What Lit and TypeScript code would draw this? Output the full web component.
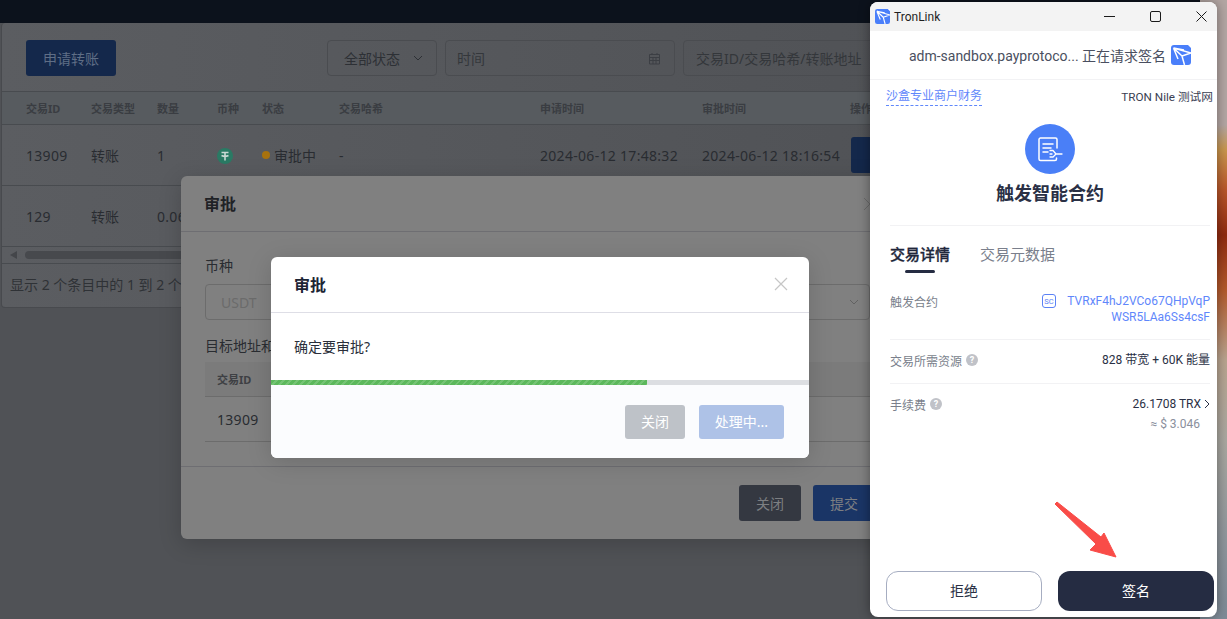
import { LitElement, html, css, svg } from "lit";
import { customElement } from "lit/decorators.js";

const logo = (size: number) => html`<svg width=${size} height=${size} viewBox="0 0 20 20" class="logo">
  <path d="M3 0H20V17A3 3 0 0 1 17 20H3A3 3 0 0 1 0 17V3A3 3 0 0 1 3 0Z" fill="#4a7ffa"/>
  ${svg`<path d="M2.5 3L20 8M2.5 3L11 11L13.5 20M11 11L20 8M2.5 3L7 14M2.5 3L13 5" fill="none" stroke="#fff" stroke-width="1.5" stroke-linejoin="round"/>`}
  <path d="M17 0L20 0L20 3Z" fill="#fff"/>
</svg>`;

const rows = [
  { id: "13909", type: "转账", amount: "1", full: true },
  { id: "129", type: "转账", amount: "0.06", full: false },
];

@customElement("app-root")
export class AppRoot extends LitElement {
  static styles = css`
    :host {
      display: block;
      position: relative;
      width: 1227px;
      height: 619px;
      overflow: hidden;
      background: #505256;
      font-family: "Noto Sans", "Noto Sans CJK SC", sans-serif;
      font-size: 14px;
      color: #292c31;
    }
    * { box-sizing: border-box; }
    .desktop {
      position: absolute;
      left: 1200px; top: 0; width: 27px; height: 619px;
      background: linear-gradient(180deg, #b3a6a3 0, #b3a6a3 125px, #c9964c 150px, #b8562a 190px, #8f2a10 235px, #b35a2c 290px, #b9a48f 360px, #a9a7a0 440px, #8f969c 540px, #7d8a96 619px);
    }
    .topbar { height: 23px; background: #0c121c; }
    .card {
      margin-left: 1px;
      width: 920px;
      height: 285px;
      border: 1px solid #484a4e;
      border-top: none;
      border-radius: 4px 0 0 4px;
      background: linear-gradient(90deg, #5b5d61, #505256);
    }
    .toolbar { display: flex; height: 69px; padding: 17px 0 0 24px; border-bottom: 1px solid #484b4f; }
    .apply {
      width: 90px; height: 36px; border-radius: 3px; flex: none;
      background: #14284b; color: #5f6e86; font-size: 14px;
      display: flex; align-items: center; justify-content: center;
    }
    .filters { display: flex; gap: 8px; margin-left: 211px; flex: none; }
    .field {
      height: 36px; border: 1px solid #4a4c50; border-radius: 4px; flex: none;
      display: flex; align-items: center; justify-content: space-between;
      color: #2d3035; font-size: 14px;
    }
    .select { width: 110px; padding: 0 13px 0 16px; }
    .date { width: 230px; padding: 0 13px 0 11px; color: #34373b; }
    .search { width: 260px; padding: 0 11px 0 12px; color: #34373b; justify-content: flex-start; }
    .grid {
      display: grid;
      grid-template-columns: 65px 66px 60px 45px 77px 201px 162px 148px 1fr;
      padding-left: 24px;
      align-items: center;
      border-bottom: 1px solid #484b4f;
    }
    .thead { height: 33px; font-size: 11px; font-weight: 700; color: #3a3d42; background: #575b5f; }
    .row { height: 61px; white-space: nowrap; }
    .num { letter-spacing: .3px; }
    .coin { display: block; margin-top: 2px; }
    .status { display: flex; align-items: center; gap: 4px; }
    .dot { width: 8px; height: 8px; border-radius: 50%; background: #a8720e; }
    .op { width: 40px; height: 36px; border-radius: 3px; background: #14284b; margin-left: 1px; }
    .scroll { height: 17px; display: flex; align-items: center; gap: 8px; padding-left: 8px; border-bottom: 1px solid #484b4f; }
    .arrow { width: 0; height: 0; border: 4px solid transparent; border-left: 0; border-right: 7px solid #44464a; }
    .thumb { width: 500px; height: 8px; border-radius: 4px; background: #47494d; }
    .foot { padding: 10px 8px; font-size: 14px; color: #2f3236; }

    .modal {
      position: absolute;
      border-radius: 6px;
      display: flex;
      flex-direction: column;
    }
    .m1 {
      left: 181px; top: 176px; width: 720px; height: 363px;
      background: #808080;
      box-shadow: 0 5px 22px rgba(0,0,0,.18);
      color: #292c31;
    }
    .m1-head {
      height: 56px; flex: none; border-bottom: 1px solid #6e6e72;
      padding: 0 23px 2px; display: flex; align-items: center;
      font-size: 16px; font-weight: 700; color: #1f2226;
    }
    .m1-close { position: absolute; left: 682px; top: 21px; }
    .m1-body { padding: 26px 25px 0 24px; flex: none; height: 235px; border-bottom: 1px solid #6e6e72; }
    .label { line-height: 20px; height: 20px; margin-top: -2px; }
    .m1-input {
      margin-top: 8px; height: 36px; width: 665px; border: 1px solid #6c6c6c; border-radius: 4px;
      padding: 0 10px 0 15px; display: flex; align-items: center; justify-content: space-between;
      color: #6b6b6b; font-weight: 400;
    }
    .label2 { margin-top: 16px; white-space: nowrap; }
    .sub-head {
      margin-top: 6px; height: 35px; background: #7b7b7b; border-bottom: 1px solid #6c6c6c;
      padding: 0 11px 0 12px; font-size: 11px; font-weight: 700; color: #3e4044;
      display: flex; align-items: center; width: 665px;
    }
    .sub-row {
      height: 45px; border-bottom: 1px solid #6c6c6c; padding: 0 11px 0 12px;
      display: flex; align-items: center; width: 665px;
    }
    .m1-foot { display: flex; gap: 12px; padding: 18px 0 0 558px; }
    .m1-btn {
      height: 36px; border-radius: 3px; display: flex; align-items: center; justify-content: center;
      color: #7d7f82; font-size: 14px; flex: none; padding-bottom: 1px;
    }
    .dark { width: 62px; background: #343841; }
    .blue { width: 62px; background: #1a3566; }

    .m2 {
      left: 271px; top: 257px; width: 538px; height: 201px;
      background: #fff; overflow: hidden;
      box-shadow: 0 4px 24px rgba(0,0,0,.15);
      color: #1c2434;
    }
    .m2-head {
      height: 56px; flex: none; border-bottom: 1px solid #dedee6;
      padding: 0 21px 2px 23px; display: flex; align-items: center; justify-content: space-between;
      font-size: 16px; font-weight: 700;
    }
    .m2-body { height: 67px; flex: none; padding-top: 24px; padding-left: 23px; color: #2a2f3a; font-size: 14px; line-height: 20px; }
    .track { height: 5px; flex: none; background: #dcdee2; }
    .bar {
      height: 100%;
      background: repeating-linear-gradient(135deg, #5cb85c 0 3px, #75c475 3px 5px);
    }
    .m2-foot {
      flex: 1; background: #fbfcfe; display: flex; justify-content: flex-end;
      gap: 14px; padding: 20px 25px 0 0;
    }
    .m2-btn {
      height: 34px; border-radius: 3px; color: #fff; font-size: 14px; padding-bottom: 2px;
      display: flex; align-items: center; justify-content: center;
    }
    .gray { width: 60px; background: #bec2c8; }
    .proc { width: 85px; background: #aec2e7; }

    .win {
      position: absolute; left: 870px; top: 2px; width: 347px; height: 615px;
      background: #fff; border-radius: 8px; overflow: hidden;
      box-shadow: 0 0 12px rgba(0,0,0,.4);
      font-family: Roboto, "Noto Sans CJK SC", sans-serif;
      color: #2a3045;
      display: flex; flex-direction: column;
    }
    .title {
      height: 29px; flex: none; background: #f3f3f3;
      display: flex; align-items: center; gap: 24px; padding: 0 5px 0 5px;
      color: #1f1f1f; font-size: 12px;
    }
    .title .name { margin-left: -20px; flex: 1; }
    .ctl { width: 22px; height: 29px; display: flex; align-items: center; justify-content: center; }
    .req {
      height: 49px; flex: none; border-bottom: 1px solid #f2f2f4;
      display: flex; align-items: center; justify-content: center; gap: 5px;
      font-size: 14px; color: #4a4f60; padding-left: 13px; white-space: nowrap;
    }
    .meta { display: flex; justify-content: space-between; align-items: flex-start; padding: 7px 4px 0 16px; font-size: 12px; flex: none; height: 44px; }
    .merchant { color: #5f87fb; border-bottom: 1px dashed #5f87fb; line-height: 18px; height: 19px; font-size: 12px; }
    .net { color: #3a4052; line-height: 20px; font-size: 11.7px; }
    .circle {
      width: 50px; height: 50px; border-radius: 50%; background: #4a7ff7; flex: none; align-self: center; margin-left: 13px;
      display: flex; align-items: center; justify-content: center;
    }
    .heading { text-align: center; font-size: 18px; font-weight: 700; line-height: 26px; margin-top: 7px; padding-left: 13px; color: #2a3045; flex: none; }
    .sep { margin: 18px 7px 0 20px; border-top: 1px solid #f2f2f4; flex: none; }
    .tabs { display: flex; gap: 30px; padding: 18px 0 0 20px; font-size: 15px; line-height: 22px; height: 62px; flex: none; }
    .tab { color: #7a7f8c; position: relative; height: 22px; }
    .tab.on { color: #20263a; font-weight: 500; -webkit-text-stroke: .3px #20263a; }
    .tab.on::after {
      content: ""; position: absolute; left: 15px; bottom: -7px; width: 30px; height: 3px;
      border-radius: 2px; background: #252c42;
    }
    .kv { display: flex; justify-content: space-between; align-items: flex-start; margin: 0 7px 0 20px; font-size: 12px; flex: none; }
    .k { color: #7a7f8c; display: flex; align-items: center; gap: 4px; height: 18px; }
    .kv1 { padding-top: 4px; height: 52px; border-bottom: 1px solid #f2f2f4; }
    .kv2 { padding-top: 11px; height: 44px; border-bottom: 1px solid #f2f2f4; }
    .kv3 { padding-top: 11px; }
    .addr { display: flex; gap: 11px; color: #5f87fb; line-height: 16px; padding-top: 1px; }
    .addr-text { text-align: right; width: 143px; }
    .sc { margin-top: 1px; flex: none; }
    .q {
      width: 12px; height: 12px; border-radius: 50%; background: #c0c2c8; color: #fff;
      font-size: 9px; font-weight: 700; font-style: normal; display: flex; align-items: center; justify-content: center; flex: none;
    }
    .v { color: #2a3045; line-height: 18px; display: flex; align-items: center; gap: 3px; }
    .fee { align-self: flex-end; margin: 2px 17px 0 0; color: #8a8f9c; font-size: 12px; line-height: 18px; flex: none; }
    .actions { margin-top: auto; display: flex; gap: 16px; padding: 0 3px 6px 16px; flex: none; }
    .act { width: 156px; height: 40px; border-radius: 12px; display: flex; align-items: center; justify-content: center; font-size: 14px; padding-bottom: 2px; }
    .reject { border: 1px solid #a6adc1; color: #2a3045; }
    .sign { background: #252c42; color: #fff; }
    .pointer { position: absolute; left: 1050px; top: 498px; }
  `;

  private chevron(stroke: string) {
    return html`<svg width="10" height="6" viewBox="0 0 10 6"><path d="M1 1L5 5L9 1" fill="none" stroke=${stroke} stroke-width="1"/></svg>`;
  }

  render() {
    return html`
      <div class="desktop"></div>
      <div class="topbar"></div>
      <div class="card">
        <div class="toolbar">
          <div class="apply">申请转账</div>
          <div class="filters">
            <div class="field select">全部状态 ${this.chevron("#2d3035")}</div>
            <div class="field date">时间
              <svg width="13" height="13" viewBox="0 0 13 13"><path d="M1.5 2.5H11.5V12H1.5ZM1.5 5.5H11.5M4 1V3M9 1V3M5 5.5V12M8 5.5V12M1.5 8.5H11.5" fill="none" stroke="#3c3f44" stroke-width="1"/></svg>
            </div>
            <div class="field search">交易ID/交易哈希/转账地址</div>
          </div>
        </div>
        <div class="grid thead">
          <span>交易ID</span><span>交易类型</span><span>数量</span><span>币种</span><span>状态</span>
          <span>交易哈希</span><span>申请时间</span><span>审批时间</span><span>操作</span>
        </div>
        ${rows.map((r) => html`
          <div class="grid row">
            <span class="num">${r.id}</span><span>${r.type}</span><span class="num">${r.amount}</span>
            <span>
              <svg class="coin" width="16" height="16" viewBox="0 0 16 16">
                <circle cx="8" cy="8" r="8" fill="#2a7a64"/>
                <path d="M4.5 4.5H11.5M8 4.5V12.5M4.5 7.5C6.5 8.5 9.5 8.5 11.5 7.5" fill="none" stroke="#c9d8d3" stroke-width="1.6"/>
              </svg>
            </span>
            <span class="status"><i class="dot"></i>审批中</span>
            <span>-</span>
            <span class="num">2024-06-12 17:48:32</span>
            <span class="num">2024-06-12 18:16:54</span>
            <span>${r.full ? html`<div class="op"></div>` : ""}</span>
          </div>`)}
        <div class="scroll"><i class="arrow"></i><i class="thumb"></i></div>
        <div class="foot">显示 2 个条目中的 1 到 2 个条目</div>
      </div>

      <div class="modal m1">
        <div class="m1-head">审批</div>
        <svg class="m1-close" width="14" height="14" viewBox="0 0 14 14"><path d="M1 1L13 13M13 1L1 13" stroke="#6a6a6a" stroke-width="1"/></svg>
        <div class="m1-body">
          <div class="label">币种</div>
          <div class="m1-input">USDT ${this.chevron("#626262")}</div>
          <div class="label label2">目标地址和</div>
          <div class="sub-head">交易ID</div>
          <div class="sub-row num">13909</div>
        </div>
        <div class="m1-foot">
          <div class="m1-btn dark">关闭</div>
          <div class="m1-btn blue">提交</div>
        </div>
      </div>

      <div class="modal m2">
        <div class="m2-head">审批
          <svg width="14" height="14" viewBox="0 0 14 14"><path d="M1 1L13 13M13 1L1 13" stroke="#c6c6c6" stroke-width="1.2"/></svg>
        </div>
        <div class="m2-body">确定要审批?</div>
        <div class="track"><div class="bar" style="width:${(376 / 538) * 100}%"></div></div>
        <div class="m2-foot">
          <div class="m2-btn gray">关闭</div>
          <div class="m2-btn proc">处理中...</div>
        </div>
      </div>

      <div class="win">
        <div class="title">
          ${logo(15)}
          <span class="name">TronLink</span>
          <span class="ctl"><svg width="11" height="11" viewBox="0 0 11 11"><path d="M0 5.5H11" stroke="#1a1a1a" stroke-width="1"/></svg></span>
          <span class="ctl"><svg width="11" height="11" viewBox="0 0 11 11"><rect x=".5" y=".5" width="10" height="10" rx="1.5" fill="none" stroke="#1a1a1a"/></svg></span>
          <span class="ctl"><svg width="11" height="11" viewBox="0 0 11 11"><path d="M.5 .5L10.5 10.5M10.5 .5L.5 10.5" stroke="#1a1a1a" stroke-width="1"/></svg></span>
        </div>
        <div class="req"><span>adm-sandbox.payprotoco... 正在请求签名</span>${logo(20)}</div>
        <div class="meta">
          <span class="merchant">沙盒专业商户财务</span>
          <span class="net">TRON Nile 测试网</span>
        </div>
        <div class="circle">
          <svg width="28" height="28" viewBox="0 0 28 28" fill="none" stroke="#fff" stroke-width="1.5" stroke-linecap="round" stroke-linejoin="round">
            <path d="M21 13V4.5A1.5 1.5 0 0 0 19.5 3H4.5A1.5 1.5 0 0 0 3 4.5V24A1.5 1.5 0 0 0 4.5 25.5H19A1.5 1.5 0 0 0 20.5 24V23"/>
            <path d="M7 9H17M7 13H15M7 17H12"/>
            <path d="M14 15.5H17L20 19H26M14 22H17L20 19M14 19H16" stroke-width="1.3"/>
          </svg>
        </div>
        <div class="heading">触发智能合约</div>
        <div class="sep"></div>
        <div class="tabs"><span class="tab on">交易详情</span><span class="tab">交易元数据</span></div>
        <div class="kv kv1">
          <span class="k">触发合约</span>
          <span class="addr">
            <svg class="sc" width="14" height="14" viewBox="0 0 14 14">
              <rect x=".5" y=".5" width="13" height="13" rx="2.5" fill="none" stroke="#5b82f5"/>
              <text x="7" y="9.7" font-size="7.5" text-anchor="middle" fill="#5b82f5" font-family="Roboto">SC</text>
            </svg>
            <span class="addr-text">TVRxF4hJ2VCo67QHpVqP WSR5LAa6Ss4csF</span>
          </span>
        </div>
        <div class="kv kv2">
          <span class="k">交易所需资源 <i class="q">?</i></span>
          <span class="v">828 带宽 + 60K 能量</span>
        </div>
        <div class="kv kv3">
          <span class="k">手续费 <i class="q">?</i></span>
          <span class="v">26.1708 TRX
            <svg width="6" height="10" viewBox="0 0 6 10"><path d="M1 1L5 5L1 9" fill="none" stroke="#2a3045" stroke-width="1"/></svg>
          </span>
        </div>
        <div class="fee">≈ $ 3.046</div>
        <div class="actions">
          <div class="act reject">拒绝</div>
          <div class="act sign">签名</div>
        </div>
      </div>

      <svg class="pointer" width="72" height="64" viewBox="0 0 72 64">
        <path d="M5 6L7 4L51 39L54 35L66 59L40 52L46 46Z" fill="#f94c48" stroke="#f94c48" stroke-width="1" stroke-linejoin="round"/>
      </svg>
    `;
  }
}
